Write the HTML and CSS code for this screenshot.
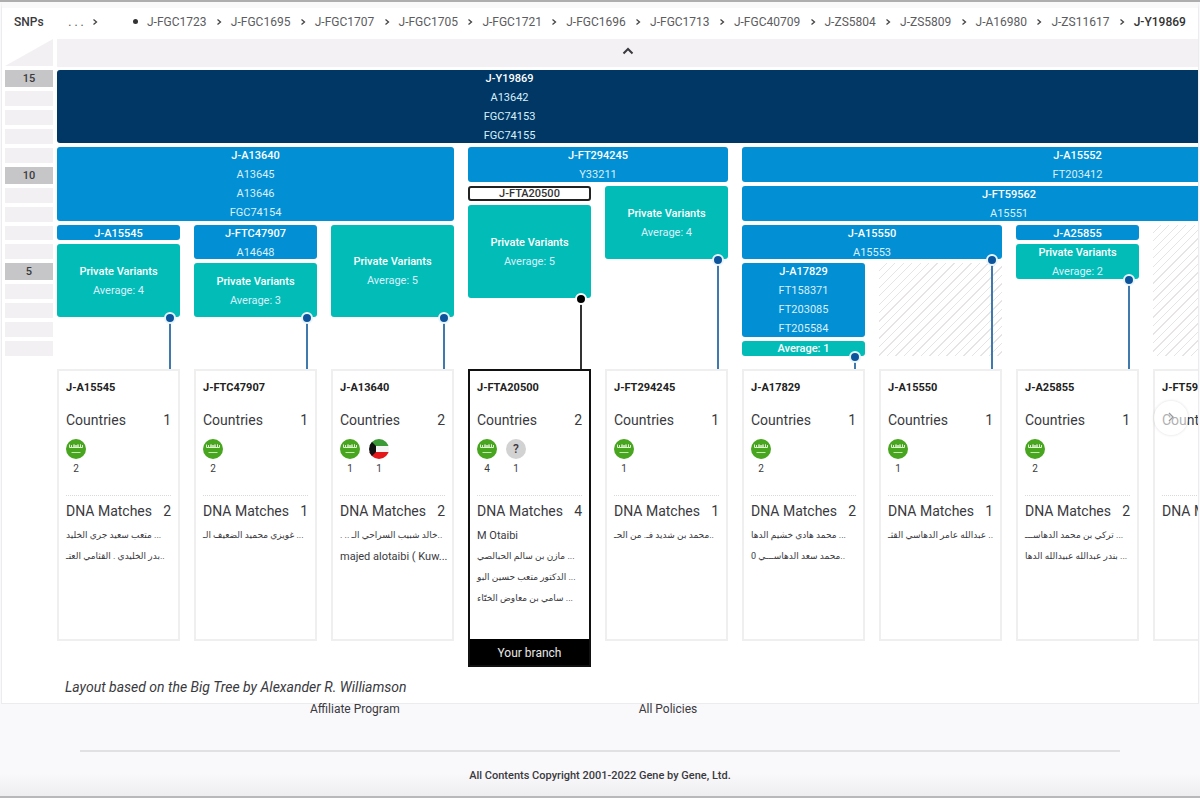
FILE: index.html
```
<!DOCTYPE html>
<html lang="en">
<head>
    <meta charset="UTF-8">
    <meta name="viewport" content="width=device-width, initial-scale=1.0">
    <title>Block Tree</title>
    <link rel="stylesheet" href="styles.css">
</head>
<body>
    <svg class="defs" aria-hidden="true">
        <symbol id="chevron" viewBox="0 0 6 8">
            <path d="M1.5 1.5 L4.5 4 L1.5 6.5" fill="none" stroke="currentColor" stroke-width="1.3"/>
        </symbol>
        <clipPath id="round"><circle cx="10" cy="10" r="10"/></clipPath>
        <symbol id="sa" viewBox="0 0 20 20">
            <circle cx="10" cy="10" r="10" fill="#48a51f"/>
            <path d="M3.5 5.5v3h2v-2.5 2.5h2.5v-3 3h2v-2.5 2.5h2v-3 3h2.5v-3 3h2v-2.5" fill="none" stroke="#dff3d3" stroke-width="1"/>
            <path d="M5.5 13.5h9" stroke="#c4e8b0" stroke-width="1"/>
        </symbol>
        <symbol id="kw" viewBox="0 0 20 20">
            <g clip-path="url(#round)">
                <rect width="20" height="20" fill="#f4f4f4"/>
                <rect width="20" height="7" fill="#3c9a36"/>
                <rect y="13" width="20" height="7" fill="#e3181b"/>
                <path d="M0 0 L7 7 V13 L0 20z" fill="#111"/>
            </g>
        </symbol>
    </svg>

    <main class="sheet">
        <nav class="snps" aria-label="SNPs">
            <strong class="snps-title">SNPs</strong>
            <button class="more" type="button">. . .</button>
            <svg class="sep"><use href="#chevron"/></svg>
            <ol class="path">
                <li><a href="#">J-FGC1723</a></li>
                <li><svg class="sep"><use href="#chevron"/></svg><a href="#">J-FGC1695</a></li>
                <li><svg class="sep"><use href="#chevron"/></svg><a href="#">J-FGC1707</a></li>
                <li><svg class="sep"><use href="#chevron"/></svg><a href="#">J-FGC1705</a></li>
                <li><svg class="sep"><use href="#chevron"/></svg><a href="#">J-FGC1721</a></li>
                <li><svg class="sep"><use href="#chevron"/></svg><a href="#">J-FGC1696</a></li>
                <li><svg class="sep"><use href="#chevron"/></svg><a href="#">J-FGC1713</a></li>
                <li><svg class="sep"><use href="#chevron"/></svg><a href="#">J-FGC40709</a></li>
                <li><svg class="sep"><use href="#chevron"/></svg><a href="#">J-ZS5804</a></li>
                <li><svg class="sep"><use href="#chevron"/></svg><a href="#">J-ZS5809</a></li>
                <li><svg class="sep"><use href="#chevron"/></svg><a href="#">J-A16980</a></li>
                <li><svg class="sep"><use href="#chevron"/></svg><a href="#">J-ZS11617</a></li>
                <li><svg class="sep"><use href="#chevron"/></svg><a href="#" class="current">J-Y19869</a></li>
            </ol>
        </nav>

        <div class="tree">
            <div class="side">
                <div class="corner"></div>
                <div class="scale">
                    <span class="mark">15</span>
                    <span></span><span></span><span></span><span></span>
                    <span class="mark">10</span>
                    <span></span><span></span><span></span><span></span>
                    <span class="mark">5</span>
                    <span></span><span></span><span></span><span></span>
                </div>
            </div>

            <div class="view">
                <button class="up" type="button" aria-label="Go up one level">
                    <svg width="12" height="8" viewBox="0 0 12 8"><path d="M1.5 6.5 L6 2 L10.5 6.5" fill="none" stroke="currentColor" stroke-width="2"/></svg>
                </button>

                <div class="blocks">
                    <div class="block root c1 s10 r1 h4"><b>J-Y19869</b><span>A13642</span><span>FGC74153</span><span>FGC74155</span></div>

                    <div class="block c1 s3 r5 h4"><b>J-A13640</b><span>A13645</span><span>A13646</span><span>FGC74154</span></div>
                    <div class="block c4 s2 r5 h2"><b>J-FT294245</b><span>Y33211</span></div>
                    <div class="block c6 s5 r5 h2"><b>J-A15552</b><span>FT203412</span></div>

                    <div class="block mine c4 r7 h1"><b>J-FTA20500</b></div>
                    <div class="block c6 s4 r7 h2"><b>J-FT59562</b><span>A15551</span></div>

                    <div class="block c1 r9 h1"><b>J-A15545</b></div>
                    <div class="block c2 r9 h2"><b>J-FTC47907</b><span>A14648</span></div>
                    <div class="block c6 s2 r9 h2"><b>J-A15550</b><span>A15553</span></div>
                    <div class="block c8 r9 h1"><b>J-A25855</b></div>
                    <div class="block c6 r11 h4"><b>J-A17829</b><span>FT158371</span><span>FT203085</span><span>FT205584</span></div>

                    <!-- private variants -->
                    <div class="block private c1 r10 h4"><b>Private Variants</b><span>Average: 4</span></div>
                    <div class="block private c2 r11 h3"><b>Private Variants</b><span>Average: 3</span></div>
                    <div class="block private c3 r9 h5"><b>Private Variants</b><span>Average: 5</span></div>
                    <div class="block private c4 r8 h5"><b>Private Variants</b><span>Average: 5</span></div>
                    <div class="block private c5 r7 h4"><b>Private Variants</b><span>Average: 4</span></div>
                    <div class="block private c6 r15 h1"><b>Average: 1</b></div>
                    <div class="block private c8 r10 h2"><b>Private Variants</b><span>Average: 2</span></div>

                    <div class="hatch c7 r11 h5"></div>
                    <div class="hatch c9 r9 h7"></div>

                    <!-- lines down to the cards -->
                    <div class="pin c1 r14"></div>
                    <div class="pin c2 r14"></div>
                    <div class="pin c3 r14"></div>
                    <div class="pin pin-mine c4 r13"></div>
                    <div class="pin c5 r11"></div>
                    <div class="pin c6 r16"></div>
                    <div class="pin c7 r11"></div>
                    <div class="pin c8 r12"></div>
                </div>

                <div class="cards">
                    <article class="card">
                        <h2>J-A15545</h2>
                        <h3>Countries <span>1</span></h3>
                        <div class="flags">
                            <div class="flag"><svg><use href="#sa"/></svg>2</div>
                        </div>
                        <h3>DNA Matches <span>2</span></h3>
                        <ul>
                            <li lang="ar">متعب سعيد جري الخليد ...</li>
                            <li lang="ar">بدر الخليدي . القثامي العتـ..</li>
                        </ul>
                    </article>

                    <article class="card">
                        <h2>J-FTC47907</h2>
                        <h3>Countries <span>1</span></h3>
                        <div class="flags">
                            <div class="flag"><svg><use href="#sa"/></svg>2</div>
                        </div>
                        <h3>DNA Matches <span>1</span></h3>
                        <ul>
                            <li lang="ar">غويزي محميد الضعيف الـ ...</li>
                        </ul>
                    </article>

                    <article class="card">
                        <h2>J-A13640</h2>
                        <h3>Countries <span>2</span></h3>
                        <div class="flags">
                            <div class="flag"><svg><use href="#sa"/></svg>1</div>
                            <div class="flag"><svg><use href="#kw"/></svg>1</div>
                        </div>
                        <h3>DNA Matches <span>2</span></h3>
                        <ul>
                            <li lang="ar">. .. خالد شبيب السراحي الـ..</li>
                            <li>majed alotaibi ( Kuw...</li>
                        </ul>
                    </article>

                    <article class="card card-mine">
                        <h2>J-FTA20500</h2>
                        <h3>Countries <span>2</span></h3>
                        <div class="flags">
                            <div class="flag"><svg><use href="#sa"/></svg>4</div>
                            <div class="flag"><i>?</i>1</div>
                        </div>
                        <h3>DNA Matches <span>4</span></h3>
                        <ul>
                            <li>M Otaibi</li>
                            <li lang="ar">مازن بن سالم الحبالصي ...</li>
                            <li lang="ar">الدكتور متعب حسين البو ...</li>
                            <li lang="ar">سامي بن معاوض الختّاء ...</li>
                        </ul>
                        <footer>Your branch</footer>
                    </article>

                    <article class="card">
                        <h2>J-FT294245</h2>
                        <h3>Countries <span>1</span></h3>
                        <div class="flags">
                            <div class="flag"><svg><use href="#sa"/></svg>1</div>
                        </div>
                        <h3>DNA Matches <span>1</span></h3>
                        <ul>
                            <li lang="ar">محمد بن شديد فـ. من الحـ..</li>
                        </ul>
                    </article>

                    <article class="card">
                        <h2>J-A17829</h2>
                        <h3>Countries <span>1</span></h3>
                        <div class="flags">
                            <div class="flag"><svg><use href="#sa"/></svg>2</div>
                        </div>
                        <h3>DNA Matches <span>2</span></h3>
                        <ul>
                            <li lang="ar">محمد هادي خشيم الدها ...</li>
                            <li lang="ar">0 محمد سعد الدهاســـي..</li>
                        </ul>
                    </article>

                    <article class="card">
                        <h2>J-A15550</h2>
                        <h3>Countries <span>1</span></h3>
                        <div class="flags">
                            <div class="flag"><svg><use href="#sa"/></svg>1</div>
                        </div>
                        <h3>DNA Matches <span>1</span></h3>
                        <ul>
                            <li lang="ar">عبدالله عامر الدهاسي القثـ ..</li>
                        </ul>
                    </article>

                    <article class="card">
                        <h2>J-A25855</h2>
                        <h3>Countries <span>1</span></h3>
                        <div class="flags">
                            <div class="flag"><svg><use href="#sa"/></svg>2</div>
                        </div>
                        <h3>DNA Matches <span>2</span></h3>
                        <ul>
                            <li lang="ar">تركي بن محمد الدهاســـ ...</li>
                            <li lang="ar">بندر عبدالله عبيدالله الدها ...</li>
                        </ul>
                    </article>

                    <article class="card">
                        <h2>J-FT59562</h2>
                        <h3>Countries</h3>
                        <div class="flags"></div>
                        <h3>DNA Matches</h3>
                    </article>
                </div>

                <p class="credit">Layout based on the Big Tree by Alexander R. Williamson</p>

                <button class="next" type="button" aria-label="Scroll right">
                    <svg width="8" height="10" viewBox="0 0 8 10"><path d="M2 1 L6 5 L2 9" fill="none" stroke="currentColor" stroke-width="1.3"/></svg>
                </button>
            </div>
        </div>
    </main>

    <footer class="page-footer">
        <div class="links">
            <a href="#">Affiliate Program</a>
            <a href="#">All Policies</a>
        </div>
        <p class="copyright">All Contents Copyright 2001-2022 Gene by Gene, Ltd.</p>
    </footer>
</body>
</html>
```
FILE: styles.css
```
*, *::before {
    box-sizing: border-box;
}

body {
    margin: 0;
    min-height: 100vh;
    display: flex;
    flex-direction: column;
    font-family: Roboto, "DejaVu Sans", sans-serif;
    font-size: 12px;
    color: #3a3a3e;
    background-color: #f9f8fb;
    border-top: 2px solid #aeaeae;
    border-bottom: 2px solid #b8b8ba;
}

h2, h3, p, ul, ol {
    margin: 0;
    padding: 0;
}

ul, ol {
    list-style: none;
}

a {
    color: inherit;
    text-decoration: none;
}

button {
    padding: 0;
    border: none;
    font: inherit;
    color: inherit;
    background: none;
    cursor: pointer;
}

.defs {
    position: absolute;
    width: 0;
    height: 0;
}

.sheet {
    margin: 0 1px;
    background-color: #fff;
    border: 1px solid #ececee;
    border-top: 6px solid #f9f9f9;
    overflow: hidden;
}

/* SNP path */
.snps {
    display: flex;
    align-items: center;
    height: 31px;
    padding: 0 12px 4px;
    white-space: nowrap;
}

.snps-title {
    width: 53px;
    font-weight: 500;
}

.more {
    width: 18px;
    margin-right: 7px;
    color: #555;
}

.sep {
    flex: none;
    width: 6px;
    height: 8px;
    color: #444;
}

.path {
    flex: 1;
    display: flex;
    justify-content: space-between;
    align-items: center;
    margin-left: 35px;
    color: #5c5c60;
}

.path li {
    display: flex;
    align-items: center;
    gap: 9px;
}

.path li:first-child::before {
    content: "";
    width: 5px;
    height: 5px;
    border-radius: 50%;
    background-color: #333;
}

.path .current {
    font-weight: 500;
    color: #333;
}

/* Tree */
.tree {
    display: flex;
    gap: 4px;
    padding-left: 3px;
}

.side {
    flex: none;
    width: 48px;
}

.corner {
    height: 27px;
    margin-bottom: 4px;
    background-color: #f2f0f3;
    clip-path: polygon(100% 0, 100% 100%, 0 100%);
}

.scale {
    display: grid;
    grid-template-rows: repeat(15, 1fr);
    gap: 4px;
    height: 286px;
}

.scale span {
    background-color: #f2f0f3;
}

.scale .mark {
    background-color: #c6c5c7;
    text-align: center;
    font-size: 11px;
    font-weight: 500;
    line-height: 17px;
}

.view {
    position: relative;
    flex: 1;
    min-width: 0;
    overflow: hidden;
}

.up {
    display: flex;
    align-items: center;
    justify-content: center;
    width: 100%;
    height: 28px;
    margin-bottom: 3px;
    padding-bottom: 4px;
    background-color: #f3f1f4;
}

.blocks {
    display: grid;
    grid-template-columns: repeat(10, 123px);
    grid-template-rows: repeat(15, 1fr) 9px;
    column-gap: 14px;
    row-gap: 4px;
    height: 299px;
}

.block {
    display: flex;
    flex-direction: column;
    align-items: center;
    gap: 1px;
    min-height: 0;
    border-radius: 3px;
    font-size: 11px;
    line-height: 18px;
    color: #d9effb;
    background-color: #028fd3;
}

.block b {
    font-weight: 500;
    color: #fff;
}

.root {
    background-color: #003765;
    padding-right: 451px;
}

.private {
    justify-content: center;
    padding-top: 2px;
    background-color: #02bdb7;
}

.mine {
    justify-content: center;
    border: 2px solid #222;
    background-color: #fff;
}

.mine b {
    color: #333;
}

.hatch {
    background-image: repeating-linear-gradient(135deg, #fff 0 5px, #e6e4e4 5px 6px);
}

.pin {
    position: relative;
    grid-row-end: 17;
    justify-self: end;
    width: 2px;
    margin: -3px 9px 0 0;
    background-color: #3f79ae;
}

.pin::before {
    content: "";
    position: absolute;
    top: -6px;
    left: -5px;
    width: 12px;
    height: 12px;
    border: 2px solid #e8f5fc;
    border-radius: 50%;
    background-color: #0c559c;
}

.pin-mine {
    background-color: #333;
}

.pin-mine::before {
    border-color: #fff;
    background-color: #000;
}

/* grid placement: column, column span, row, row span */
.c1 { grid-column-start: 1; }
.c2 { grid-column-start: 2; }
.c3 { grid-column-start: 3; }
.c4 { grid-column-start: 4; }
.c5 { grid-column-start: 5; }
.c6 { grid-column-start: 6; }
.c7 { grid-column-start: 7; }
.c8 { grid-column-start: 8; }
.c9 { grid-column-start: 9; }

.s2 { grid-column-end: span 2; }
.s3 { grid-column-end: span 3; }
.s4 { grid-column-end: span 4; }
.s5 { grid-column-end: span 5; }
.s10 { grid-column-end: span 10; }

.r1 { grid-row-start: 1; }
.r5 { grid-row-start: 5; }
.r7 { grid-row-start: 7; }
.r8 { grid-row-start: 8; }
.r9 { grid-row-start: 9; }
.r10 { grid-row-start: 10; }
.r11 { grid-row-start: 11; }
.r12 { grid-row-start: 12; }
.r13 { grid-row-start: 13; }
.r14 { grid-row-start: 14; }
.r15 { grid-row-start: 15; }
.r16 { grid-row-start: 16; }

.h1 { grid-row-end: span 1; }
.h2 { grid-row-end: span 2; }
.h3 { grid-row-end: span 3; }
.h4 { grid-row-end: span 4; }
.h5 { grid-row-end: span 5; }
.h7 { grid-row-end: span 7; }

/* Cards */
.cards {
    display: grid;
    grid-template-columns: repeat(9, 123px);
    column-gap: 14px;
    align-items: start;
}

.card {
    min-height: 272px;
    padding: 9px 7px 8px;
    border: 2px solid #f0eff0;
    background-color: #fff;
}

.card h2 {
    font-size: 11px;
    font-weight: 700;
    line-height: 16px;
    color: #222;
}

.card h3 {
    display: flex;
    justify-content: space-between;
    font-size: 14px;
    font-weight: 400;
    line-height: 20px;
    white-space: nowrap;
}

.card h2 + h3 {
    margin-top: 14px;
}

.flags {
    display: flex;
    gap: 9px;
    height: 66px;
    padding-top: 9px;
    margin-bottom: 5px;
    border-bottom: 1px dotted #d9d9db;
}

.flag {
    display: flex;
    flex-direction: column;
    align-items: center;
    font-size: 10px;
    line-height: 20px;
}

.flag svg, .flag i {
    width: 20px;
    height: 20px;
}

.flag i {
    border-radius: 50%;
    background-color: #d3d2d3;
    text-align: center;
    font-size: 12px;
    font-style: normal;
    font-weight: 500;
}

.card ul {
    margin-top: 4px;
}

.card li {
    height: 21px;
    font-size: 11px;
    line-height: 21px;
    white-space: nowrap;
}

.card li:lang(ar) {
    font-size: 9px;
}

.card-mine {
    display: flex;
    flex-direction: column;
    min-height: 298px;
    padding-bottom: 0;
    border-color: #111;
}

.card-mine footer {
    margin: auto -7px 0;
    padding-top: 2px;
    text-align: center;
    line-height: 24px;
    color: #e8e8e8;
    background-color: #000;
}

.credit {
    padding: 12px 8px 8px;
    font-size: 14px;
    font-style: italic;
    line-height: 16px;
}

/* floats over the last visible card */
.next {
    position: absolute;
    top: 362px;
    right: 10px;
    width: 34px;
    height: 34px;
    border-radius: 50%;
    color: #999;
    background-color: rgba(255, 255, 255, 0.6);
    box-shadow: 0 0 3px rgba(0, 0, 0, 0.15);
}

/* Footer */
.page-footer {
    flex: 1;
    padding: 0 80px;
    background-image: linear-gradient(to bottom, transparent 75%, #eeedf0);
}

.links {
    display: flex;
    gap: 239px;
    height: 48px;
    padding-left: 230px;
    line-height: 11px;
    border-bottom: 2px solid #e1e0e3;
}

.copyright {
    margin-top: 16px;
    text-align: center;
    font-size: 11px;
    font-weight: 500;
    line-height: 16px;
}
```
